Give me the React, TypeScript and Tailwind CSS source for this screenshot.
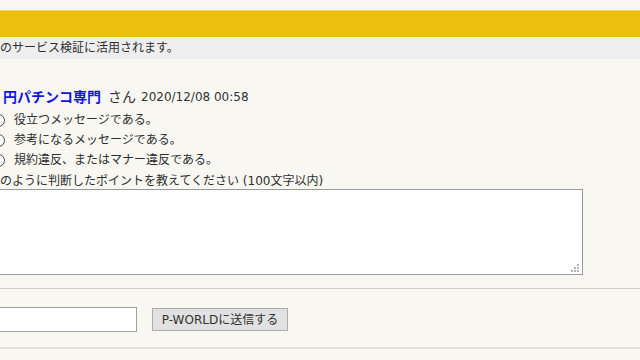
const FONT = "font-['DejaVu_Sans','Noto_Sans_CJK_JP',sans-serif]";

const RADIO_OPTIONS = [
  "役立つメッセージである。",
  "参考になるメッセージである。",
  "規約違反、またはマナー違反である。",
];

const ResizeGrip = (): JSX.Element => (
  <svg
    width="9"
    height="9"
    viewBox="0 0 9 9"
    className="pointer-events-none absolute bottom-[2px] right-[3px]"
  >
    {[
      [6, 0],
      [6, 3],
      [3, 3],
      [6, 6],
      [3, 6],
      [0, 6],
    ].map(([x, y]) => (
      <rect key={`${x}-${y}`} x={x} y={y} width="2" height="2" fill="#b5b5b5" />
    ))}
  </svg>
);

const RadioRow = ({ label }: { label: string }): JSX.Element => (
  <label className="flex h-[20px] items-center">
    <span className="-ml-[8px] mr-[9px] h-[13px] w-[13px] shrink-0 rounded-full border border-[#4a4a4a] bg-white" />
    <span className="text-[12px] text-[#2e2e2e]">{label}</span>
  </label>
);

export default function App(): JSX.Element {
  return (
    <div className={`h-[360px] w-[640px] overflow-hidden bg-[#f8f7f2] pt-[10px] text-[#2e2e2e] ${FONT}`}>
      <div className="h-[27px] border-t border-[#f3d871] bg-[#edc00f]" />
      <div className="flex h-[22px] items-center bg-[#eeeeee] text-[12px] leading-none">
        のサービス検証に活用されます。
      </div>

      <section className="mt-[28px]">
        <div className="flex h-[20px] items-center whitespace-nowrap pl-[3px]">
          <span className="text-[14px] font-bold text-[#1414e6]">円パチンコ専門</span>
          <span className="ml-[7px] text-[14px] text-[#333]">さん</span>
          <span className="ml-[5px] text-[12px] text-[#333]">2020/12/08 00:58</span>
        </div>

        <div className="mt-[3px] flex flex-col">
          {RADIO_OPTIONS.map((option) => (
            <RadioRow key={option} label={option} />
          ))}
        </div>

        <div className="mt-[3px] h-[16px] whitespace-nowrap text-[12px] leading-[16px]">
          のように判断したポイントを教えてください (100文字以内)
        </div>

        <div className="relative -ml-[8px] h-[86px] w-[591px]">
          <textarea className="block h-full w-full resize-none border border-[#999] bg-white outline-none" />
          <ResizeGrip />
        </div>
      </section>

      <div className="mt-[13px] h-px bg-[#cfcfcf]" />

      <div className="mt-[18px] flex items-center">
        <input
          type="text"
          className="-ml-[41px] h-[25px] w-[178px] border border-[#a0a0a0] bg-white outline-none"
        />
        <button className="ml-[15px] h-[23px] w-[136px] border border-[#adadad] bg-[#e1e1e1] text-[12px] text-[#333]">
          P-WORLDに送信する
        </button>
      </div>

      <div className="mt-[15px] h-[2px] bg-[#e0e0e0]" />
    </div>
  );
}
